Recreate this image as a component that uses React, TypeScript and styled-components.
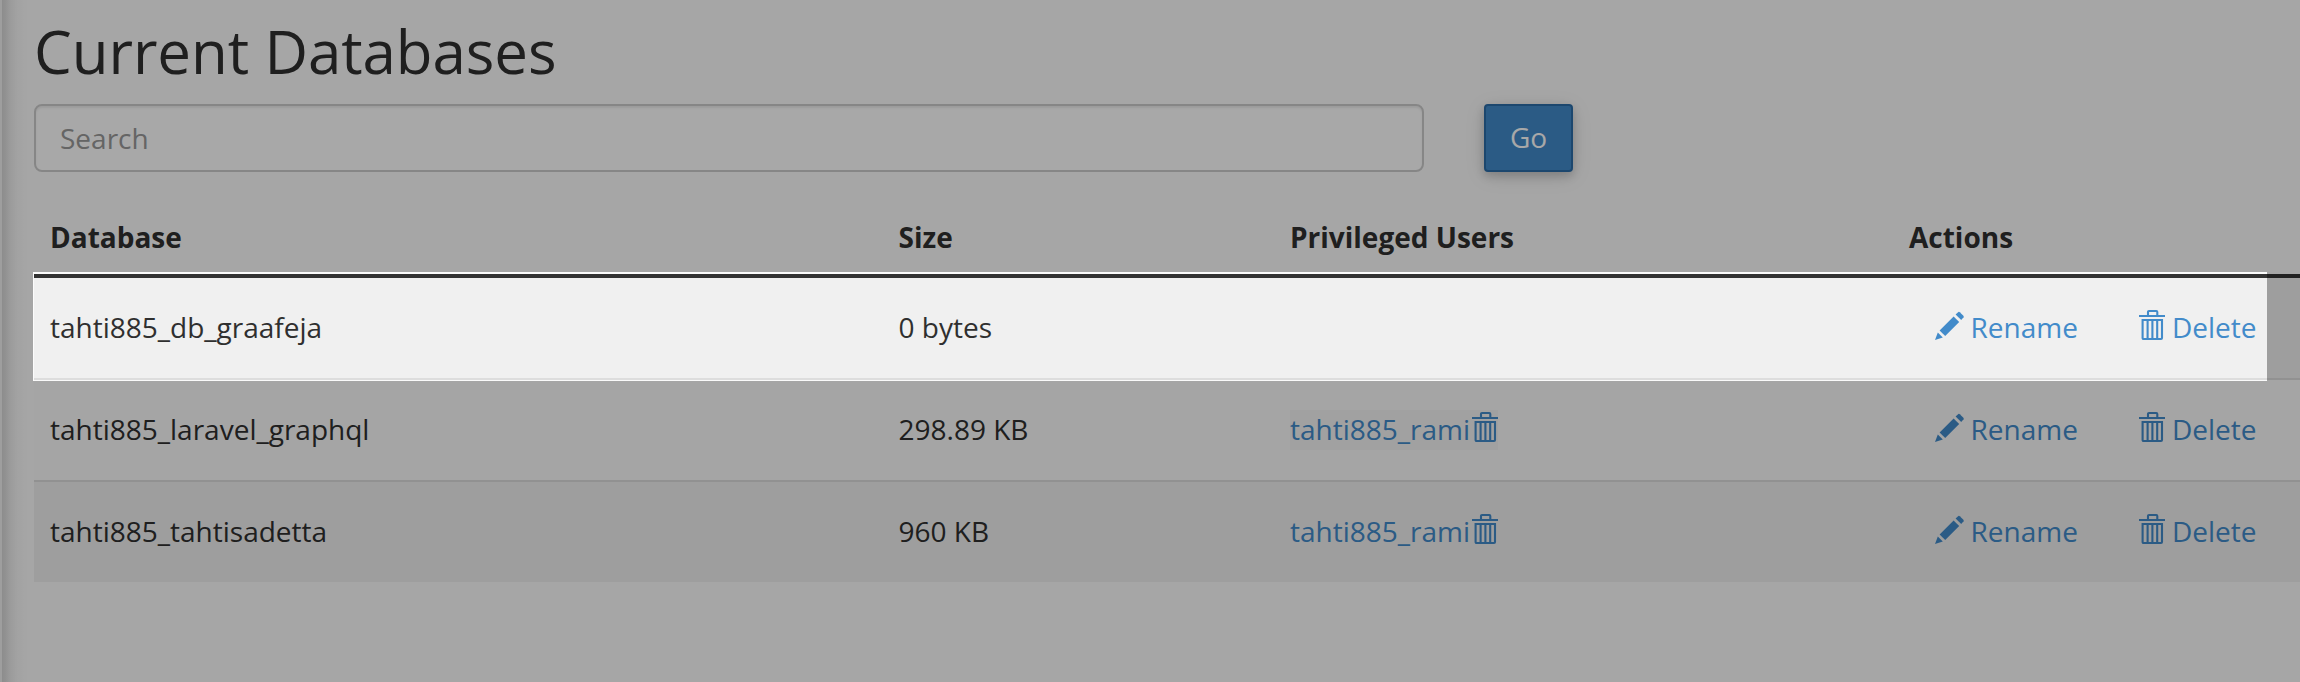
import React from "react";
import styled, { createGlobalStyle } from "styled-components";

const GlobalStyle = createGlobalStyle`
  * { box-sizing: border-box; }
  body {
    margin: 0;
    background: #fcfcfc;
    font-family: "Open Sans", sans-serif;
    font-size: 28px;
    line-height: 40px;
    color: #2f2f2f;
    overflow: hidden;
  }
`;

const Page = styled.main`
  position: relative;
  width: 100%;
  height: 682px;
  overflow: hidden;
  padding: 18px 0 0 34px;
  background: linear-gradient(to right, #f0f0f0 0, #f0f0f0 2px, #d6d6d6 2px, #dcdcdc 5px, #ebebeb 10px, #f6f6f6 17px, #fcfcfc 28px);
`;

const Title = styled.h1`
  margin: 0;
  height: 86px;
  font-size: 60px;
  line-height: 66px;
  letter-spacing: -0.07px;
  font-weight: 400;
`;

const SearchBar = styled.form`
  display: flex;
  gap: 60px;
  height: 68px;
`;

const SearchInput = styled.input`
  width: 1390px;
  height: 68px;
  padding: 0 24px;
  border: 2px solid #cccccc;
  border-radius: 8px;
  background: #fff;
  box-shadow: inset 0 2px 2px rgba(0, 0, 0, 0.075);
  font: inherit;
  color: inherit;
  &::placeholder { color: #999; opacity: 1; }
`;

const GoButton = styled.button`
  width: 89px;
  height: 68px;
  padding: 0 0 2px;
  border: 2px solid #2b6ca8;
  border-radius: 4px;
  background: #428bca;
  color: #fff;
  font: inherit;
  box-shadow: 0 4px 10px rgba(0, 0, 0, 0.16), 0 4px 20px rgba(0, 0, 0, 0.12);
`;

const Table = styled.div`
  margin-top: 32px;
`;

const Row = styled.div<{ $shaded?: boolean; $first?: boolean }>`
  display: grid;
  grid-template-columns: 848.5px 391.5px 619px 1fr;
  align-items: center;
  height: ${(p) => (p.$first ? 100 : 102)}px;
  border-top: ${(p) => (p.$first ? "0" : "2px solid #dddddd")};
  background: ${(p) => (p.$shaded ? "#f0f0f0" : "#fafafa")};
`;

const Cell = styled.div`
  padding: 0 0 2px 16px;
  white-space: nowrap;
`;

const HeaderRow = styled(Row)`
  height: 74px;
  padding-bottom: 2px;
  border-top: 0;
  border-bottom: 4px solid #333;
  background: transparent;
  font-weight: 700;
`;

const UserCell = styled(Cell)`
  padding-bottom: 0;
`;

const ActionsCell = styled(Cell)`
  display: flex;
  padding-left: 42px;
`;

const ActionLink = styled.a<{ $width: number }>`
  display: flex;
  align-items: center;
  width: ${(p) => p.$width}px;
  color: #428bca;
`;

const UserLink = styled.a<{ $marked?: boolean }>`
  display: flex;
  align-items: center;
  width: 208px;
  height: 40px;
  padding-bottom: 2px;
  justify-content: space-between;
  color: #428bca;
  background: ${(p) => (p.$marked ? "#f4f4f4" : "transparent")};
`;

const Icon = styled.svg<{ $gap?: number }>`
  flex: none;
  display: block;
  margin: 0 ${(p) => p.$gap ?? 0}px 2px 0;
`;

const Spotlight = styled.div`
  position: absolute;
  left: 33px;
  top: 272px;
  width: 2234px;
  height: 109px;
  box-shadow: 0 0 0 2400px rgba(0, 0, 0, 0.34);
  pointer-events: none;
`;

const PencilIcon = () => (
  <Icon width="29" height="36" viewBox="0 0 29 36" $gap={6.5} fill="currentColor" aria-hidden>
    <path d="M0 32 2.8 24.5 7.8 29.4Z" />
    <path d="M4.6 22.6 18.6 8.6 24.2 14 10.2 28Z" />
    <path d="M20.6 6.4 23.4 4Q24.1 3.6 24.8 4.2L28.4 7.8Q29 8.5 28.6 9.2L26.2 12Z" />
  </Icon>
);

const TrashIcon = ({ gap = 0 }: { gap?: number }) => (
  <Icon width="26" height="36" viewBox="0 0 26 36" $gap={gap} fill="none" stroke="currentColor" strokeWidth="2.1" aria-hidden>
    <path d="M0 8H26M9 7V4Q9 3 10 3H17.3Q18.3 3 18.3 4V7" />
    <path d="M3.6 12H23V30Q23 31 22 31H4.6Q3.6 31 3.6 30Z" />
    <path d="M8.6 12V31M13.4 12V31M18.2 12V31" />
  </Icon>
);

const databases = [
  { name: "tahti885_db_graafeja", size: "0 bytes", user: "" },
  { name: "tahti885_laravel_graphql", size: "298.89 KB", user: "tahti885_rami" },
  { name: "tahti885_tahtisadetta", size: "960 KB", user: "tahti885_rami" },
];

export default function App() {
  return (
    <>
      <GlobalStyle />
      <Page>
        <Title>Current Databases</Title>
        <SearchBar>
          <SearchInput placeholder="Search" />
          <GoButton type="button">Go</GoButton>
        </SearchBar>
        <Table>
          <HeaderRow>
            <Cell>Database</Cell>
            <Cell>Size</Cell>
            <Cell>Privileged Users</Cell>
            <Cell>Actions</Cell>
          </HeaderRow>
          {databases.map((db, i) => (
            <Row key={db.name} $first={i === 0} $shaded={i % 2 === 0}>
              <Cell>{db.name}</Cell>
              <Cell>{db.size}</Cell>
              <UserCell>
                {db.user && (
                  <UserLink $marked={i === 1}>
                    {db.user}
                    <TrashIcon />
                  </UserLink>
                )}
              </UserCell>
              <ActionsCell>
                <ActionLink $width={204}>
                  <PencilIcon />
                  Rename
                </ActionLink>
                <ActionLink $width={121}>
                  <TrashIcon gap={7} />
                  Delete
                </ActionLink>
              </ActionsCell>
            </Row>
          ))}
        </Table>
        <Spotlight />
      </Page>
    </>
  );
}
